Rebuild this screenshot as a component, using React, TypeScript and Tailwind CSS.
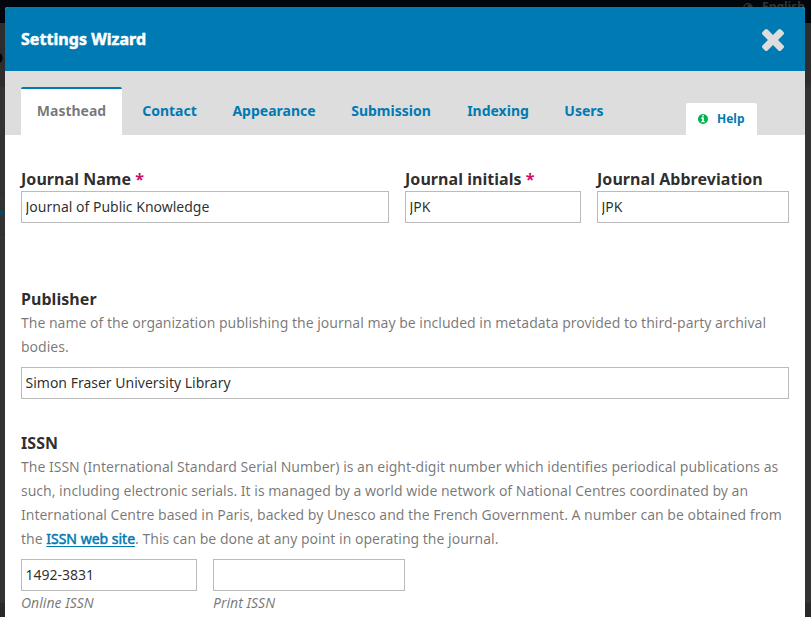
import type { ReactNode } from 'react';

const tabs = ['Masthead', 'Contact', 'Appearance', 'Submission', 'Indexing', 'Users'];

const tabWidths = ['w-[101px]', 'w-[95px]', 'w-[114px]', 'w-[120px]', 'w-[94px]', 'w-[78px]'];

function GlobeIcon() {
  return (
    <svg className="mt-[3px] size-[10px]" viewBox="0 0 10 10">
      <circle cx="5" cy="5" r="4.4" fill="none" stroke="#333" strokeWidth="1.1" />
      <path d="M5.5 1L9 3L8 6L5.5 5.5L4.5 3Z M1 3L3 4L4.5 6L3.5 8Z" fill="#333" />
    </svg>
  );
}

function CloseIcon() {
  return (
    <svg className="size-[22px] fill-[#ddd]" viewBox="110 366 1188 1188">
      <path d="M1298 1322q0 40-28 68l-136 136q-28 28-68 28t-68-28l-294-294-294 294q-28 28-68 28t-68-28l-136-136q-28-28-28-68t28-68l294-294-294-294q-28-28-28-68t28-68l136-136q28-28 68-28t68 28l294 294 294-294q28-28 68-28t68 28l136 136q28 28 28 68t-28 68l-294 294 294 294q28 28 28 68z" />
    </svg>
  );
}

function InfoIcon() {
  return (
    <svg className="size-[10px] fill-[#00b24e]" viewBox="0 128 1536 1536">
      <path d="M1024 1376v-160q0-14-9-23t-23-9h-96v-512q0-14-9-23t-23-9h-320q-14 0-23 9t-9 23v160q0 14 9 23t23 9h96v320h-96q-14 0-23 9t-9 23v160q0 14 9 23t23 9h448q14 0 23-9t9-23zm-128-896v-160q0-14-9-23t-23-9h-192q-14 0-23 9t-9 23v160q0 14 9 23t23 9h192q14 0 23-9t9-23zm640 416q0 209-103 385.5t-279.5 279.5-385.5 103-385.5-103-279.5-279.5-103-385.5 103-385.5 279.5-279.5 385.5-103 385.5 103 279.5 279.5 103 385.5z" />
    </svg>
  );
}

function Label({ children, required }: { children: ReactNode; required?: boolean }) {
  return (
    <div className="text-base leading-6 font-bold tracking-[0.05px] whitespace-nowrap">
      {children}
      {required && <span className="text-[#d00a6c]"> *</span>}
    </div>
  );
}

function Input({ value, width }: { value?: string; width: string }) {
  return (
    <input
      defaultValue={value}
      className={`block h-8 border border-[#bbb] bg-white px-[3.5px] pb-[2px] text-sm outline-none ${width}`}
    />
  );
}

export default function App() {
  return (
    <div className="relative h-[617px] w-[811px] overflow-hidden bg-[#333] font-['Noto_Sans',sans-serif] text-[rgba(0,0,0,0.84)]">
      <div className="flex h-[23px] justify-end bg-[#00060c] pr-[6px] text-[#333]">
        <div className="flex h-3 items-center gap-[9px] text-xs leading-3 font-bold">
          <GlobeIcon />
          <span className="mt-[2px]">English</span>
        </div>
      </div>
      <div className="h-16 bg-[#2d2d2d]">
        <span className="absolute top-[42px] left-[-8px] text-lg font-bold text-black">o</span>
      </div>
      <div className="absolute top-[193px] left-0 h-[42px] w-[5px] border-y border-[#2d2d2d]">
        <svg className="mt-4 h-[6px] w-[5px] fill-[#00496b]" viewBox="0 0 5 6">
          <path d="M0 0L5 3L0 6Z" />
        </svg>
      </div>
      <div className="absolute bottom-0 left-0 h-[14px] w-full bg-[#292929]" />

      <div className="absolute top-[7px] left-[5px] flex h-[620px] w-[800px] flex-col overflow-hidden rounded-[3px] bg-white">
        <header className="flex h-16 shrink-0 items-center justify-between bg-[#007ab2] pr-[21px] pl-4 text-white">
          <h1 className="text-base font-bold tracking-[0.05px] [-webkit-text-stroke:0.5px_white]">Settings Wizard</h1>
          <button className="mt-[1px]" aria-label="Close">
            <CloseIcon />
          </button>
        </header>

        <nav className="flex h-16 shrink-0 items-end justify-between bg-[#ddd] pr-12 pl-4">
          <div className="flex h-12 text-sm font-bold text-[#007ab2]">
            {tabs.map((tab, i) => (
              <div
                key={tab}
                className={`flex items-center justify-center ${tabWidths[i]} ${
                  i === 0
                    ? 'rounded-t-[2px] border-t-2 border-[#007ab2] bg-white pb-[2px] text-[rgba(0,0,0,0.54)]'
                    : ''
                }`}
              >
                {tab}
              </div>
            ))}
          </div>
          <div className="flex h-8 w-[71px] items-center gap-[9px] rounded-t-[2px] bg-white pl-3 text-xs font-bold text-[#007ab2]">
            <InfoIcon />
            Help
          </div>
        </nav>

        <form className="px-4 pt-8">
          <div className="flex gap-4">
            <div>
              <Label required>Journal Name</Label>
              <Input value="Journal of Public Knowledge" width="w-[368px]" />
            </div>
            <div>
              <Label required>Journal initials</Label>
              <Input value="JPK" width="w-[176px]" />
            </div>
            <div>
              <Label>Journal Abbreviation</Label>
              <Input value="JPK" width="w-[192px]" />
            </div>
          </div>

          <section className="mt-16">
            <Label>Publisher</Label>
            <p className="mb-2 text-sm leading-6 text-[rgba(0,0,0,0.54)]">
              The name of the organization publishing the journal may be included in metadata provided to
              third-party archival
              <br />
              bodies.
            </p>
            <Input value="Simon Fraser University Library" width="w-[768px]" />
          </section>

          <section className="mt-8">
            <Label>ISSN</Label>
            <p className="mb-2 text-sm leading-6 whitespace-nowrap text-[rgba(0,0,0,0.54)]">
              The ISSN (International Standard Serial Number) is an eight-digit number which identifies
              periodical publications as
              <br />
              such, including electronic serials. It is managed by a world wide network of National Centres
              coordinated by an
              <br />
              International Centre based in Paris, backed by Unesco and the French Government. A number can be
              obtained from
              <br />
              the{' '}
              <a className="text-[#007ab2] underline decoration-1 underline-offset-2 [-webkit-text-stroke:0.5px_#007ab2]">
                ISSN web site
              </a>
              . This can be done at any point in operating the journal.
            </p>
            <div className="flex gap-4 text-sm leading-6">
              <div>
                <Input value="1492-3831" width="w-[176px]" />
                <div className="text-[rgba(0,0,0,0.54)] italic">Online ISSN</div>
              </div>
              <div>
                <Input width="w-[192px]" />
                <div className="text-[rgba(0,0,0,0.54)] italic">Print ISSN</div>
              </div>
            </div>
          </section>
        </form>
      </div>
    </div>
  );
}
